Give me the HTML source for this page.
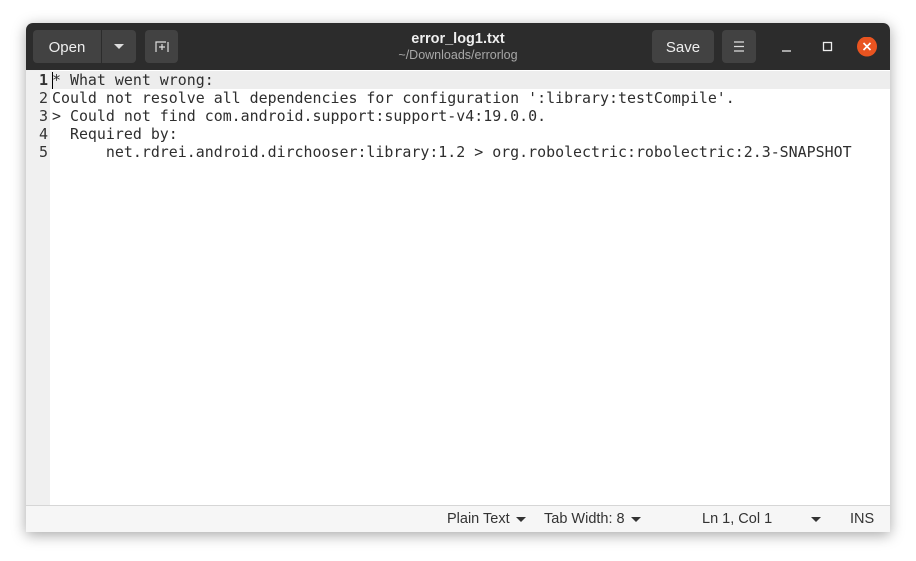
<!DOCTYPE html>
<html><head><style>
body{margin:0;width:916px;height:561px;background:#fff;position:relative;overflow:hidden;font-family:"Liberation Sans",sans-serif}
.win{position:absolute;left:26px;top:23px;width:864px;height:509px;background:#fff;box-shadow:0 3px 14px rgba(0,0,0,.35);border-radius:7px 7px 0 0;overflow:hidden}
.hdr{position:absolute;left:0;top:0;width:864px;height:47px;background:#2c2c2c}
.btn{position:absolute;top:7px;height:33px;background:#424242;border-radius:4px;color:#eee;font-size:15px;line-height:35px;text-align:center}
.gut{position:absolute;left:0;top:47px;width:24px;height:435px;background:#f0f0f0;font-family:"DejaVu Sans Mono",monospace;font-size:15px;line-height:18px;color:#333;text-align:right}
.txt{position:absolute;left:26px;top:47px;right:0;font-family:"DejaVu Sans Mono",monospace;font-size:14.93px;line-height:18px;color:#2e2e2e;white-space:pre}
.cur{position:absolute;left:24px;top:48px;width:840px;height:18px;background:#ededed}
.sb{position:absolute;left:0;top:482px;width:864px;height:27px;background:#f6f6f6;border-top:1px solid #d6d6d6;font-size:14.5px;color:#333;line-height:27px}
.sb span{position:absolute}
.tri{display:inline-block;width:0;height:0;border-left:5px solid transparent;border-right:5px solid transparent;border-top:5px solid #333;vertical-align:middle;margin-left:6px}
</style></head><body>
<div class="win">
<div class="hdr">
 <div class="btn" style="left:7px;width:68px;border-radius:4px 0 0 4px">Open</div>
 <div class="btn" style="left:76px;width:34px;border-radius:0 4px 4px 0;line-height:31px"><span class="tri" style="border-top-color:#ddd;margin:0"></span></div>
 <div class="btn" style="left:119px;width:33px"><svg width="33" height="33"><path d="M11 22V12h10M23 12v10M14 17h6M17 14v6" stroke="#ddd" fill="none" stroke-width="1.2"/></svg></div>
 <div style="position:absolute;left:0;width:864px;top:8px;text-align:center;color:#eee;font-weight:bold;font-size:14.5px">error_log1.txt</div>
 <div style="position:absolute;left:0;width:864px;top:25px;text-align:center;color:#a8a8a8;font-size:12.5px">~/Downloads/errorlog</div>
 <div class="btn" style="left:626px;width:62px">Save</div>
 <div class="btn" style="left:696px;width:34px"><svg width="34" height="33"><path d="M12 12h10M12 16.5h10M12 21h10" stroke="#ddd" stroke-width="1.2"/></svg></div>
 <svg style="position:absolute;left:750px;top:14px" width="110" height="20"><path d="M6 14h9" stroke="#eee" stroke-width="1.3"/><rect x="47.5" y="5.5" width="8" height="8" stroke="#eee" fill="none" stroke-width="1.3"/><circle cx="91" cy="9.5" r="10" fill="#e95420"/><path d="M87.5 6l7 7M94.5 6l-7 7" stroke="#fff" stroke-width="1.6"/></svg>
</div>
<div class="gut"><div style="padding-right:2px;padding-top:1px"><b>1</b><br>2<br>3<br>4<br>5</div></div>
<div class="cur"></div>
<div style="position:absolute;left:26px;top:49px;width:1px;height:17px;background:#000"></div>
<div class="txt" style="top:48px">* What went wrong:
Could not resolve all dependencies for configuration ':library:testCompile'.
> Could not find com.android.support:support-v4:19.0.0.
  Required by:
      net.rdrei.android.dirchooser:library:1.2 > org.robolectric:robolectric:2.3-SNAPSHOT</div>
<div class="sb">
 <span style="left:421px">Plain Text<i class="tri"></i></span>
 <span style="left:518px">Tab Width: 8<i class="tri"></i></span>
 <span style="left:676px">Ln 1, Col 1</span>
 <span style="left:779px"><i class="tri"></i></span>
 <span style="left:824px">INS</span>
</div>
</div>
</body></html>
